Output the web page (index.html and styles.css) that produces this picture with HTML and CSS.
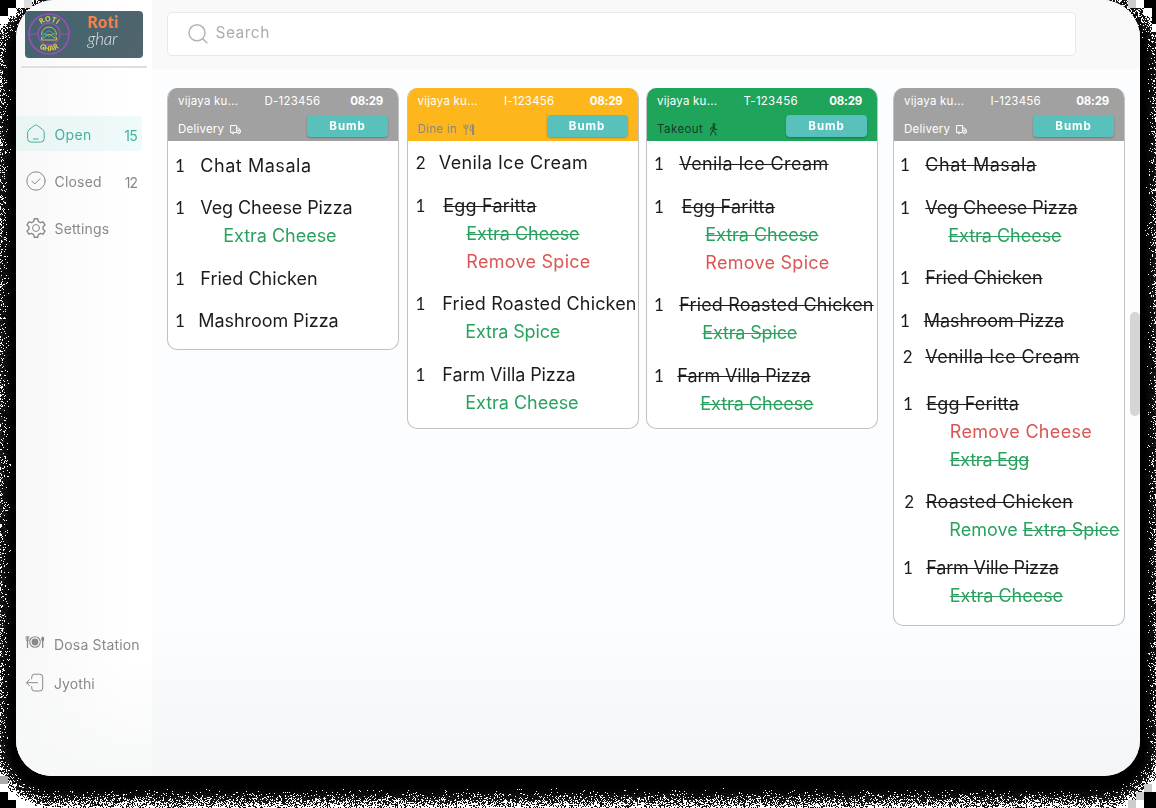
FILE: index.html
```
<!DOCTYPE html>
<html lang="en">
<head>
<meta charset="utf-8">
<title>Roti Ghar Kitchen Display</title>
<link rel="stylesheet" href="styles.css">
</head>
<body>
<canvas class="backdrop" width="1156" height="808"></canvas>
<div class="frame">
  <aside class="sidebar">
    <div class="brand">
      <svg class="brand-mark" width="44" height="44" viewBox="0 0 44 44" fill="none">
        <defs>
          <path id="arcTop" d="M9.500 22a12.500 12.500 0 0 1 25 0"/>
          <path id="arcBottom" d="M5 22a17 17 0 0 0 34 0"/>
        </defs>
        <circle cx="22" cy="22" r="20" stroke="#9a4fb5" stroke-width="1.7"/>
        <circle cx="22" cy="22" r="11" stroke="#9a4fb5" stroke-width="1.3"/>
        <path d="M2 22h9M33 22h9" stroke="#9a4fb5" stroke-width="1.2"/>
        <path d="M14.500 23a7.500 8 0 0 1 15 0" stroke="#c9bd54"/>
        <path d="M14.500 26c2-5 5-5 7.500-1 2.500-4 5.500-4 7.500 1M15.500 21c3 2 4-2 6.500-2s3.500 4 6.500 2" stroke="#4ba7ac"/>
        <path d="M14.500 25.500v2.500h15v-2.500c-3 2-4-3-7.500-3s-4.500 5-7.500 3" stroke="#c9bd54"/>
        <text class="mark-text"><textPath href="#arcTop" startOffset="50%" text-anchor="middle">ROTI</textPath></text>
        <text class="mark-text"><textPath href="#arcBottom" startOffset="50%" text-anchor="middle">GHAR</textPath></text>
      </svg>
      <div class="brand-name"><b>Roti</b><i>ghar</i></div>
    </div>
    <nav class="nav">
      <a class="nav-item active">
        <svg width="20" height="20" viewBox="0 0 20 20"><path d="M3.500 5.300 8.300 1.600a2.600 2.600 0 0 1 3.200 0l4.900 3.700q1.800 1.400 1.800 3.500v5.700q0 3.600-3.600 3.600H5.200q-3.600 0-3.600-3.600V8.800q0-2.100 1.900-3.500zM7.300 15h5"/></svg>
        <span data-w="37">Open</span><em data-w="12.500">15</em>
      </a>
      <a class="nav-item">
        <svg width="20" height="20" viewBox="0 0 20 20"><circle cx="10" cy="10" r="9.200"/><path d="m6 10.200 2.800 2.800 5.200-5.200"/></svg>
        <span data-w="47">Closed</span><em data-w="12">12</em>
      </a>
      <a class="nav-item">
        <svg width="20" height="20" viewBox="0 0 20 20"><circle cx="10" cy="10" r="3.500"/><path d="M8.300.8h3.400l.7 2.700 2 1.200 2.700-.8 1.900 3.200-2 1.900v2.100l2 1.900-1.900 3.200-2.700-.8-2 1.200-.7 2.700H8.300l-.7-2.700-2-1.200-2.700.8L1 13l2-1.900V9L1 7.100l1.900-3.200 2.700.8 2-1.200z" stroke-width="1.400" stroke-linejoin="round"/></svg>
        <span data-w="54.500">Settings</span>
      </a>
    </nav>
    <div class="nav-foot">
      <a class="nav-item">
        <svg width="20" height="20" viewBox="0 0 20 20"><circle cx="10" cy="8" r="3.400" fill="#888" stroke="none"/><circle cx="10" cy="8" r="5.300" stroke-width="1.100"/><path d="M2.500 7v6.500M17.700 7v6.500" stroke-width="1.300"/><path d="M1.200 2.500v3q0 1.500 1.300 1.500t1.300-1.500v-3M2.500 2.500v4" stroke-width=".9"/><ellipse cx="17.700" cy="5" rx="1.500" ry="2.600" fill="#888" stroke="none"/></svg>
        <span data-w="85.500">Dosa Station</span>
      </a>
      <a class="nav-item">
        <svg width="20" height="20" viewBox="0 0 20 20"><path d="M6.700 5.800V4.200q0-3 3-3h5q3 0 3 3v10.900q0 2.900-3 2.900h-5q-3 0-3-2.900v-1.500M12.500 9.700H1.800M4.600 6.500 1.400 9.700l3.200 3.200"/></svg>
        <span data-w="40.500">Jyothi</span>
      </a>
    </div>
  </aside>
  <main class="main">
    <header class="topbar">
      <div class="search">
        <svg width="20" height="20" viewBox="0 0 20 20"><circle cx="9" cy="8.800" r="8"/><path d="m14.700 14.600 4.600 4.600"/></svg>
        <span data-w="54">Search</span>
      </div>
    </header>
    <section class="board"></section>
    <span class="scroll-thumb"></span>
  </main>
</div>
<script src="script.js"></script>
</body>
</html>
```

FILE: styles.css
```
* { box-sizing: border-box; }
body { margin: 0; width: 1156px; height: 808px; overflow: hidden; background: #000; font-family: Inter, "Open Sans", sans-serif; }
.backdrop { position: absolute; left: 0; top: 0; z-index: -1; }
.frame { display: flex; width: 1124px; height: 776px; margin-left: 16px; overflow: hidden; border-radius: 38px 38px 36px 36px; background: #fbfdfe; }

.sidebar { display: flex; flex-direction: column; flex: none; width: 136px; background: linear-gradient(#fff0 85%, #f7f8f8), linear-gradient(90deg, #f8f8f8, #fff 85%); }
.brand { display: flex; width: 118.5px; height: 47px; margin: 11px 0 0 8.5px; border-radius: 4px; background: linear-gradient(120deg, #426470, #51646d); }
.brand-mark { margin: 1px 0 0 2px; }
.mark-text { font: bold 7.5px "Open Sans", sans-serif; fill: #dac852; }
.brand-name { display: flex; flex-direction: column; padding: 0 0 0 17px; }
.brand-name b { font: 900 16px/21px Lato, sans-serif; letter-spacing: .6px; color: #f78249; }
.brand-name i { font: italic 300 17px/14px Lato, sans-serif; letter-spacing: -.2px; color: #dce5e7; }
.sidebar::before { content: ""; order: 1; width: 126px; height: 2px; margin: 8px 0 0 5px; background: #dfdfdf; }
.nav { order: 2; margin-top: 48px; }
.nav-foot { order: 3; margin-top: 369px; }
.nav-item { display: flex; align-items: center; width: 126px; height: 35px; margin-bottom: 12px; padding: 0 5px 0 9.5px; border-radius: 0 4px 4px 0; font-size: 14px; color: #898989; white-space: nowrap; }
.nav-item svg { flex: none; margin-right: 9px; fill: none; stroke: currentColor; stroke-width: 1; stroke-linecap: round; overflow: visible; }
.nav-item span { padding-top: 2px; }
.nav-item em { margin-left: auto; padding-top: 3px; font-style: normal; }
.nav-item.active { color: #43b09f; background: linear-gradient(90deg, #e9f4f3, #eefbfa); }
.nav-foot .nav-item { margin-bottom: 4px; padding-left: 9px; }

.main { position: relative; flex: 1; background: linear-gradient(#fbfdff 80%, #f3f5f6); }
.topbar { height: 69px; padding: 12px 15px; background: #f9f9f9; }
.search { display: flex; align-items: center; width: 909px; height: 44px; padding: 0 20px 3px; border: 1px solid #e8e8e8; border-radius: 5px; background: #fff; color: #adadad; font-size: 15.5px; }
.search svg { margin-right: 7.5px; margin-top: 3px; fill: none; stroke: #b3b3b3; stroke-width: 1.5; }
.board { display: flex; align-items: flex-start; gap: 7.5px; padding: 19px 14px 0 15px; }
.card { flex: none; width: 232px; border: 1px solid #c2c2c2; border-radius: 10px; background: #fff; overflow: hidden; }
.card:last-child { margin-left: 7.5px; }
.card-head { height: 53px; margin: -1px -1px 0; padding: 6px 16px 0 11px; color: #fff; font-size: 11.500px; white-space: nowrap; }
.card-meta { display: grid; grid-template-columns: 86.500px 1fr auto; line-height: 15px; }
.card-meta b { font-weight: 700; }
.card-action { display: flex; justify-content: space-between; margin-right: -5px; padding-top: 6px; }
.service { display: flex; align-items: center; height: 28px; gap: 6px; }
.service svg { fill: none; stroke: currentColor; stroke-width: 1; }
.bumb { width: 81px; height: 22px; border: 0; border-radius: 4px; background: #59c1bc; box-shadow: 0 1px 2px #0004; color: #fff; font: bold 11.500px/22px Inter, sans-serif; text-align: center; padding: 0; }
.grey .card-head { background: #a1a1a1; }
.amber .card-head { background: #fdb71c; }
.green .card-head { background: #1fa55b; }
.grey, .amber, .green { border-top: 0; padding-top: 1px; }
.amber .service { color: #8e8878; }
.green .service { color: #163b25; }
.line { display: flex; height: 28px; font-size: 18px; line-height: 28px; color: #1c1c1c; white-space: nowrap; }
.qty { flex: none; font-size: 17px; }
.qty.one { font-family: Lato, sans-serif; }
.struck { text-decoration: line-through; text-decoration-thickness: 1px; }
.add { color: #2aa25f; }
.remove { color: #dc5554; }
.scroll-thumb { position: absolute; right: 0; top: 312px; width: 10px; height: 104px; border-radius: 5px; background: #d5d5d6; }
```

FILE: script.js
```
const truck = '<svg width="11" height="11" viewBox="0 0 11 11"><path d="M2 8.500H.6V1.500h6v7H4M6.600 4h2l1.800 2.300v2.200H9.500M6.600 6.300h3.700"/><circle cx="3" cy="8.800" r="1"/><circle cx="8.500" cy="8.800" r="1"/></svg>';
const fork = '<svg width="12" height="11" viewBox="0 0 12 11"><path d="M1 .500v2.500q0 1.500 2 1.500t2-1.500V.500M3 .500V11M9.500 11V.500Q7.300 1 7.300 4.500v2h2.200M10.600.500V11"/></svg>';
const walker = '<svg width="9" height="13" viewBox="0 0 9 13"><circle cx="5" cy="1.700" r="1.200"/><path d="M4.500 3.500 1.800 5.200v2M4.500 3.500l-.8 4-2.400 5M5 3.500l1 2.600 2.400.6M3.700 7.500 5.800 9l1.300 3.500M5 3.500v4"/></svg>';

// Item: [gap above, quantity indent, quantity, name indent, name, width, struck]
// Modifier: [gap above, kind, indent, name, width, struck]
const orders = [
  { tone: 'grey', code: 'D-123456', cw: 55.5, service: 'Delivery', sw: 46, icon: truck, pad: 14, lines: [
    [10.5, 8, 1, 33, 'Chat Masala', 111], [14.5, 8, 1, 33, 'Veg Cheese Pizza', 152], [0, 'add', 56, 'Extra Cheese', 113],
    [14.5, 8, 1, 33, 'Fried Chicken', 117], [14.5, 8, 1, 31, 'Mashroom Pizza', 140]] },
  { tone: 'amber', code: 'I-123456', cw: 50, service: 'Dine in', sw: 39, icon: fork, pad: 11, lines: [
    [8, 9, 2, 32, 'Venila Ice Cream', 149], [14.5, 9, 1, 36.5, 'Egg Faritta', 93, 1], [0, 'add', 59.5, 'Extra Cheese', 113, 1], [0, 'remove', 59.5, 'Remove Spice', 124],
    [14.5, 9, 1, 35.5, 'Fried Roasted Chicken', 194], [0, 'add', 58.5, 'Extra Spice', 94.5], [14.5, 9, 1, 35.5, 'Farm Villa Pizza', 133], [0, 'add', 58.5, 'Extra Cheese', 113]] },
  { tone: 'green', code: 'T-123456', cw: 54, service: 'Takeout', sw: 46, icon: walker, pad: 10, lines: [
    [9, 8, 1, 33, 'Venila Ice Cream', 149, 1], [14.5, 8, 1, 35.5, 'Egg Faritta', 93, 1], [0, 'add', 59, 'Extra Cheese', 113, 1], [0, 'remove', 59, 'Remove Spice', 124],
    [14.5, 8, 1, 33, 'Fried Roasted Chicken', 194, 1], [0, 'add', 56, 'Extra Spice', 94.5, 1], [14.5, 8, 1, 31, 'Farm Villa Pizza', 133, 1], [0, 'add', 54, 'Extra Cheese', 113, 1]] },
  { tone: 'grey', code: 'I-123456', cw: 50, service: 'Delivery', sw: 46, icon: truck, pad: 15, lines: [
    [10, 7, 1, 32, 'Chat Masala', 111, 1], [14.5, 7, 1, 32, 'Veg Cheese Pizza', 152, 1], [0, 'add', 55, 'Extra Cheese', 113, 1],
    [14.5, 7, 1, 32, 'Fried Chicken', 117, 1], [14.5, 7, 1, 30.5, 'Mashroom Pizza', 140, 1], [8.5, 9.5, 2, 32, 'Venilla Ice Cream', 154, 1],
    [18.5, 10, 1, 33, 'Egg Feritta', 92.5, 1], [0, 'remove', 56.5, 'Remove Cheese', 142], [0, 'add', 56.5, 'Extra Egg', 79, 1],
    [14, 11, 2, 32.5, 'Roasted Chicken', 147, 1], [0, 'add', 56, 'Remove <span class="struck">Extra Spice</span>', 170],
    [10, 10, 1, 33, 'Farm Ville Pizza', 132, 1], [0, 'add', 56.5, 'Extra Cheese', 113, 1]] }
];

function line(row) {
  if (typeof row[1] === 'string') {
    const [gap, kind, indent, name, w, struck] = row;
    return `<div class="line ${kind}" style="margin-top:${gap}px;padding-left:${indent - 0.7}px"><span class="${struck ? 'struck' : ''}" data-w="${w}">${name}</span></div>`;
  }
  const [gap, lead, qty, indent, name, w, struck] = row;
  return `<div class="line" style="margin-top:${gap}px;padding-left:${lead - 1}px"><span class="qty ${qty === 1 ? 'one' : ''}" style="width:${indent - lead + 0.3}px">${qty}</span><span class="${struck ? 'struck' : ''}" data-w="${w}">${name}</span></div>`;
}

document.querySelector('.board').innerHTML = orders.map(o => `
  <article class="card ${o.tone}" style="padding-bottom:${o.pad}px">
    <header class="card-head">
      <div class="card-meta"><span><span data-w="60">vijaya ku...</span></span><span><span data-w="${o.cw}">${o.code}</span></span><b data-w="32.5">08:29</b></div>
      <div class="card-action"><span class="service"><span data-w="${o.sw}">${o.service}</span>${o.icon}</span><button class="bumb"><span data-w="36">Bumb</span></button></div>
    </header>
    ${o.lines.map(line).join('')}
  </article>`).join('');

// Track each label so that it fills its nominal width.
document.querySelectorAll('[data-w]').forEach(el => {
  const range = document.createRange();
  range.selectNodeContents(el);
  const n = el.textContent.length;
  const spacing = (Number(el.dataset.w) + 0.3 - range.getBoundingClientRect().width) / n;
  el.style.letterSpacing = spacing.toFixed(3) + 'px';
});

// Grainy shadow around the frame, with blocky corners.
const canvas = document.querySelector('.backdrop');
const ctx = canvas.getContext('2d');
const image = ctx.createImageData(1156, 808);
let seed = 7;
const random = () => (seed = (seed * 16807) % 2147483647) / 2147483647;
for (let y = 0; y < 808; y++) {
  for (let x = 0; x < 1156; x++) {
    const dx = Math.max(54 - x, x - 1102, 0);
    const dy = Math.max(54 - y, y - 745, 0);
    const d = Math.hypot(dx, dy) - 38;
    const t = Math.max(0, (d - 4) / 22);
    const white = random() < t * t * 0.9;
    const v = white ? 255 : Math.floor(random() * 40 * Math.min(1, t * 2));
    const i = (y * 1156 + x) * 4;
    image.data[i] = image.data[i + 1] = image.data[i + 2] = v;
    image.data[i + 3] = 255;
  }
}
ctx.putImageData(image, 0, 0);
const blocks = [
  [0, 0, 16, 8, '#000'], [16, 0, 8, 8, '#fff'], [24, 0, 8, 8, '#ddd'], [0, 8, 8, 8, '#000'], [8, 8, 8, 8, '#fff'], [0, 16, 8, 8, '#fff'],
  [1144, 0, 12, 8, '#000'], [1136, 0, 8, 8, '#fff'], [1128, 0, 8, 8, '#ccc'], [1144, 8, 8, 8, '#fff'], [1152, 8, 4, 16, '#000'], [1152, 24, 4, 8, '#fff'],
  [0, 776, 8, 8, '#aaa'], [0, 784, 8, 8, '#fff'], [0, 792, 8, 16, '#000'], [8, 792, 8, 8, '#fff'], [8, 800, 8, 8, '#000'], [16, 800, 8, 8, '#fff'],
  [1152, 784, 4, 8, '#fff'], [1144, 784, 8, 8, '#ccc'], [1144, 792, 12, 16, '#000'], [1136, 792, 8, 8, '#ccc'], [1136, 800, 8, 8, '#fff'], [1128, 800, 8, 8, '#ccc']
];
blocks.forEach(([x, y, w, h, color]) => { ctx.fillStyle = color; ctx.fillRect(x, y, w, h); });
```
